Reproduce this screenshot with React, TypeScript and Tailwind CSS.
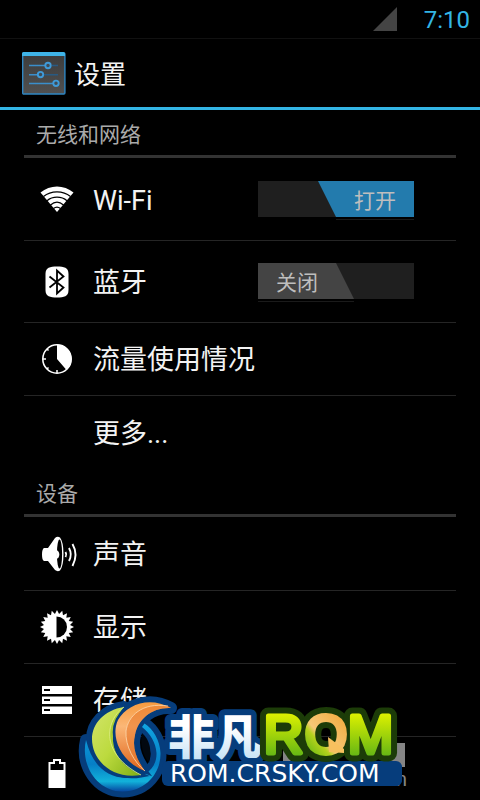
import type { ReactNode } from 'react'

const sans = "font-['Roboto','Noto_Sans_CJK_SC',sans-serif]"

function SettingsIcon() {
  return (
    <svg className="h-11 w-11" viewBox="0 0 44 44" aria-hidden="true">
      <defs>
        <linearGradient id="panel" x1="0" y1="0" x2="0" y2="1">
          <stop offset="0" stopColor="#3c3c3c" />
          <stop offset="1" stopColor="#505050" />
        </linearGradient>
      </defs>
      <rect x="0.7" y="1" width="42.2" height="41" rx="1" fill="url(#panel)" stroke="#2f86c2" strokeWidth="1.4" />
      <path d="M0 4V1.5Q0 0 1.5 0H41.5Q43 0 43 1.5V4Z" fill="#3fb4e8" />
      <path d="M7 13.5H24M7 22.8H16M7 31.5H31" stroke="#3a8ecb" strokeWidth="1.6" />
      <path d="M30 13.5H36M22 22.8H36" stroke="#285a82" strokeWidth="1.4" />
      <g fill="#3f4b55" stroke="#3f9ad8" strokeWidth="1.9">
        <circle cx="26" cy="13.5" r="2.7" />
        <circle cx="18.5" cy="22.6" r="2.7" />
        <circle cx="34" cy="31.3" r="2.7" />
      </g>
    </svg>
  )
}

function WifiIcon() {
  return (
    <svg className="h-9 w-9" viewBox="0 0 36 36" aria-hidden="true">
      <path d="M1.5 10.5C11 2.5 25 2.5 34.5 10.5L18 30Z" fill="#fff" />
      <g fill="none" stroke="#000" strokeWidth="1.2">
        <path d="M4.5 14.5C12 8.3 24 8.3 31.5 14.5" />
        <path d="M8 18.8C13.5 14 22.5 14 28 18.8" />
        <path d="M11.5 23C15.5 19.6 20.5 19.6 24.5 23" />
        <path d="M14.5 26.5C16.7 24.7 19.3 24.7 21.5 26.5" />
      </g>
    </svg>
  )
}

function BluetoothIcon() {
  return (
    <svg className="h-9 w-9" viewBox="0 0 36 36" aria-hidden="true">
      <path d="M18 2.5C25 2.5 29.5 3.5 29.5 10V26C29.5 32.5 25 33.5 18 33.5S6.5 32.5 6.5 26V10C6.5 3.5 11 2.5 18 2.5Z" fill="#fff" />
      <path d="M10.5 12.5L24.5 23.5L18 29.5V6.5L24.5 12.5L10.5 23.5" fill="none" stroke="#000" strokeWidth="1.8" />
    </svg>
  )
}

function DataIcon() {
  return (
    <svg className="h-9 w-9" viewBox="0 0 36 36" aria-hidden="true">
      <circle cx="18" cy="18" r="14.2" fill="none" stroke="#fff" strokeWidth="1.6" />
      <path d="M18 18V3.5A14.5 14.5 0 0 1 27.5 29Z" fill="#fff" />
      <path d="M4 18H7M18 29V32M8 28L9.5 26.5M8 8L9.5 9.5" stroke="#fff" strokeWidth="1.5" />
    </svg>
  )
}

function SoundIcon() {
  return (
    <svg className="h-9 w-9 overflow-visible" viewBox="0 0 36 36" aria-hidden="true">
      <path d="M5 12H9L16 2Q18.5 0 21 1.5Q24.5 6 24.5 18T21 34.5Q18.5 36 16 34L9 25H5Q3 24 3 18.5T5 12Z" fill="#fff" />
      <ellipse cx="20.5" cy="18" rx="2.6" ry="14.5" fill="#000" />
      <path d="M17.5 14Q20.3 15 20.3 18.5T17.5 23Z" fill="#fff" />
      <path d="M26.5 16Q28 18.5 26.5 21M30 12Q33.5 18.5 30 25M33.5 8Q39.5 18.5 33.5 30" fill="none" stroke="#fff" strokeWidth="1.9" />
    </svg>
  )
}

function DisplayIcon() {
  const points = Array.from({ length: 40 }, (_, i) => {
    const r = i % 2 ? 13.2 : 17
    const a = (i * Math.PI) / 20 - Math.PI / 2
    return `${18 + r * Math.cos(a)},${18 + r * Math.sin(a)}`
  }).join(' ')
  return (
    <svg className="h-9 w-9" viewBox="0 0 36 36" aria-hidden="true">
      <polygon points={points} fill="#fff" />
      <path d="M17.5 7.5A10.5 10.5 0 0 1 17.5 28.5Z" fill="#000" />
    </svg>
  )
}

function StorageIcon() {
  return (
    <svg className="h-9 w-9" viewBox="0 0 36 36" aria-hidden="true">
      <path d="M3 4H33V12H3ZM3 14.5H33V22H3ZM3 24.5H33V32H3Z" fill="#fff" />
      <path d="M5 8H11M5 18H11M5 28H11" stroke="#000" strokeWidth="2" />
    </svg>
  )
}

function BatteryIcon() {
  return (
    <svg className="h-9 w-9" viewBox="0 0 36 36" aria-hidden="true">
      <path d="M9.5 6H14V3H22V6H26.5V32H9.5Z" fill="#fff" />
      <path d="M11.5 8H16V5H20V8H24.5V14H11.5Z" fill="#000" />
    </svg>
  )
}

function Section({ title, children }: { title: string; children: ReactNode }) {
  return (
    <section className="px-6">
      <h2 className="h-12 border-b-3 border-[#333] px-3 text-[21px] leading-[50px] text-[#aaa]">{title}</h2>
      <ul className="divide-y divide-[#252525] pt-px">{children}</ul>
    </section>
  )
}

function Row({ icon, label, tall, children }: { icon?: ReactNode; label: string; tall?: boolean; children?: ReactNode }) {
  return (
    <li className={`flex items-center pl-[15px] pr-[42px] ${tall ? 'h-[82px]' : 'h-[73px]'}`}>
      <span className="mr-[18px] h-9 w-9 shrink-0">{icon}</span>
      <span className="flex-1 pt-0.5 text-[27px] leading-8 text-[#f3f3f3]">{label}</span>
      {children}
    </li>
  )
}

function Toggle({ on, name }: { on?: boolean; name: string }) {
  return (
    <button role="switch" aria-checked={!!on} aria-label={name} className="w-[156px] pt-0.5 text-[21px] leading-9 text-[#bebebe]">
      <span className="flex h-9 bg-[#1f1f1f]">
        {on ? (
          <span className="ml-auto h-9 w-24 bg-[#237bad] pt-0.5 pr-[18px] text-right [clip-path:polygon(0_0,100%_0,100%_100%,18px_100%)]">
            打开
          </span>
        ) : (
          <span className="h-9 w-24 bg-[#444] pt-0.5 pl-[18px] text-left [clip-path:polygon(0_0,78px_0,100%_100%,0_100%)]">
            关闭
          </span>
        )}
      </span>
      <span className={`mt-0.5 block h-px bg-[#1a1a1a] ${on ? 'ml-[78px]' : 'mr-[60px]'}`} />
    </button>
  )
}

const ring = 'M86 740C80 766 98 792 123 791.5C147 791 161 772 160.5 753C160 740 153 729 144.5 723.5L142 727C150 733 156 743 156.5 753C157 768 145 779 126 778C105 777 92 764 86 740Z'
const greenLeaf = 'M124 707C104 710 92 724 92 739C92 760 112 780 141 775C125 768 114 756 113 741C112.5 728 116 716 124 707Z'
const orangeLeaf = 'M171 708C150 696 127 704 118 720C110 737 121 762 145 771C136 759 132 747 135 735C138 719 152 707 171 708Z'

function BrandBadge() {
  return (
    <svg className="pointer-events-none absolute bottom-0 left-19 h-[110px] w-[340px]" viewBox="76 690 340 110" role="img" aria-label="非凡ROM">
      <defs>
        <linearGradient id="green" x1="0" y1="0" x2="1" y2="1">
          <stop offset="0" stopColor="#d3e56b" />
          <stop offset="0.5" stopColor="#bcda3e" />
          <stop offset="1" stopColor="#7fae14" />
        </linearGradient>
        <linearGradient id="orange" x1="0" y1="0" x2="0" y2="1">
          <stop offset="0" stopColor="#f79a3e" />
          <stop offset="0.35" stopColor="#fbb777" />
          <stop offset="1" stopColor="#df641c" />
        </linearGradient>
        <linearGradient id="blue" x1="0" y1="0" x2="0" y2="1">
          <stop offset="0" stopColor="#10a5e2" />
          <stop offset="0.6" stopColor="#067fc6" />
          <stop offset="0.85" stopColor="#12b2da" />
          <stop offset="1" stopColor="#0646a0" />
        </linearGradient>
        <linearGradient id="ice" x1="0" y1="0" x2="0" y2="1">
          <stop offset="0.4" stopColor="#fff" />
          <stop offset="1" stopColor="#b9dcf3" />
        </linearGradient>
        <linearGradient id="lime" gradientUnits="userSpaceOnUse" x1="0" y1="714" x2="0" y2="757">
          <stop offset="0" stopColor="#dcf000" />
          <stop offset="1" stopColor="#62b515" />
        </linearGradient>
        <linearGradient id="amber" gradientUnits="userSpaceOnUse" x1="308" y1="752" x2="344" y2="720">
          <stop offset="0" stopColor="#6fbb14" />
          <stop offset="0.3" stopColor="#b4d21c" />
          <stop offset="0.42" stopColor="#f7c877" />
          <stop offset="1" stopColor="#f3ae45" />
        </linearGradient>
      </defs>

      <path d="M390 743H405V767H390ZM283 747H288L291 762H283Z" fill="#858585" />
      <text x="396" y="786" fontSize="20" fill="#858585">n</text>

      {/* globe */}
      <g fill="#063d7c" stroke="#063d7c" strokeWidth="12" strokeLinejoin="round">
        <path d={ring} />
        <path d={greenLeaf} />
        <path d={orangeLeaf} />
      </g>
      <path d="M142 733C150 740 152 750 149 763C142 754 140 743 142 733Z" fill="#020810" />
      <path d={ring} fill="url(#blue)" />
      <path d={greenLeaf} fill="#063d7c" stroke="#063d7c" strokeWidth="5" />
      <path d={greenLeaf} fill="url(#green)" />
      <path d="M124 707C104 722 101 754 141 775C125 768 114 756 113 741C112.5 728 116 716 124 707Z" fill="#8fbd1c" opacity="0.5" />
      <path d="M124 707C104 722 101 754 141 775" fill="none" stroke="#e3f08e" strokeWidth="0.8" />
      <path d={orangeLeaf} fill="#063d7c" stroke="#063d7c" strokeWidth="5" />
      <path d={orangeLeaf} fill="url(#orange)" />
      <path d="M168 706C142 702 128 716 126 731C125 746 134 762 145 771C136 759 132 747 135 735C138 719 152 707 171 708Z" fill="#e8792c" opacity="0.55" />
      <path d="M168 706C142 702 128 716 126 731C125 746 134 762 145 771" fill="none" stroke="#fdd9ae" strokeWidth="0.8" />

      {/* word mark */}
      <rect x="162" y="761" width="240" height="25" rx="6" fill="#063d7c" />
      <text
        x="168"
        y="754"
        className="font-['Noto_Sans_CJK_SC',sans-serif] font-black"
        fontSize="47"
        fill="url(#ice)"
        stroke="#063d7c"
        strokeWidth="12"
        strokeLinejoin="round"
        paintOrder="stroke"
      >
        非凡
      </text>
      <g className="font-['Liberation_Sans',sans-serif]" fontSize="54" strokeLinejoin="round">
        <g fill="#1c3c08" stroke="#1c3c08" strokeWidth="17">
          <text x="264" y="753">R</text>
          <text x="305" y="753">O</text>
          <text x="348" y="753">M</text>
        </g>
        <g strokeWidth="5">
          <text x="264" y="753" fill="url(#lime)" stroke="url(#lime)">R</text>
          <text x="305" y="753" fill="url(#amber)" stroke="url(#amber)">O</text>
          <text x="348" y="753" fill="url(#lime)" stroke="url(#lime)">M</text>
        </g>
      </g>
      <path d="M328 737L344 749L344 753L329 752Z" fill="#f7c05e" />
      <rect x="264" y="762" width="138" height="24" rx="6" fill="#063d7c" />
      <text x="170" y="782" className="font-['DejaVu_Sans',sans-serif]" fontSize="25" fill="#fff">ROM.CRSKY.COM</text>
    </svg>
  )
}

export default function App() {
  return (
    <div className={`relative h-screen overflow-hidden bg-black ${sans}`}>
      <div className="flex h-[39px] items-center justify-end gap-[27px] border-b border-[#111] pr-[10px]">
        <svg className="h-6 w-6" viewBox="0 0 24 24" aria-hidden="true">
          <path d="M0 24L24 0V24Z" fill="#444" />
        </svg>
        <time className="pt-0.5 text-2xl text-[#33b5e5]">7:10</time>
      </div>
      <header className="flex h-[71px] items-center gap-2 border-b-3 border-[#33b5e5] px-[22px] pt-0.5">
        <SettingsIcon />
        <h1 className="pt-0.5 text-[26px] text-[#f3f3f3]">设置</h1>
      </header>
      <Section title="无线和网络">
        <Row icon={<WifiIcon />} label="Wi-Fi" tall><Toggle on name="Wi-Fi" /></Row>
        <Row icon={<BluetoothIcon />} label="蓝牙" tall><Toggle name="蓝牙" /></Row>
        <Row icon={<DataIcon />} label="流量使用情况" />
        <Row label="更多..." />
      </Section>
      <Section title="设备">
        <Row icon={<SoundIcon />} label="声音" />
        <Row icon={<DisplayIcon />} label="显示" />
        <Row icon={<StorageIcon />} label="存储" />
        <Row icon={<BatteryIcon />} label="电池" />
      </Section>
      <BrandBadge />
    </div>
  )
}
